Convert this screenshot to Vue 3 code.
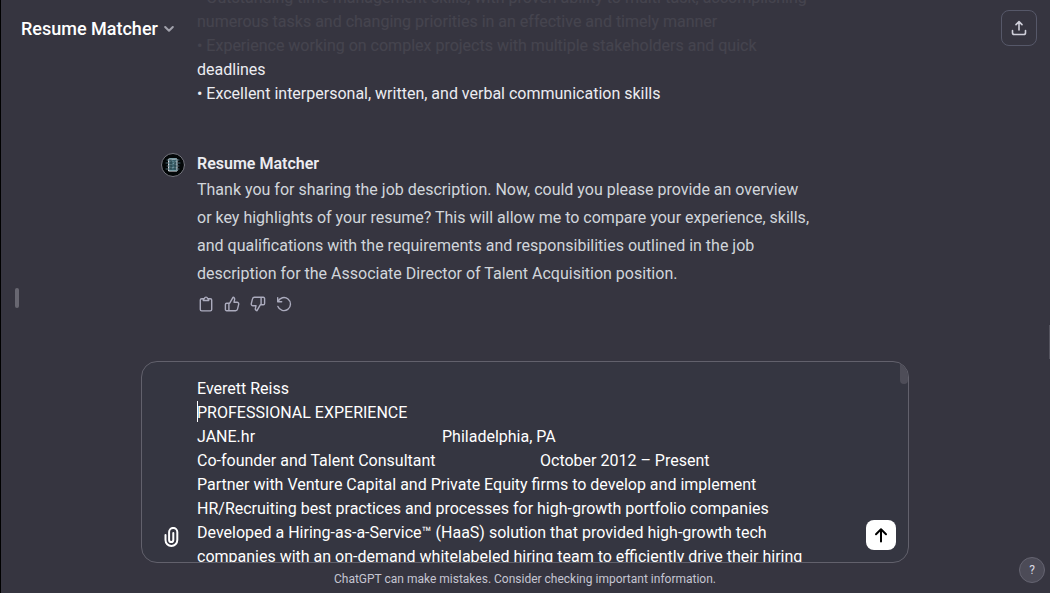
<script setup>
import { ref } from 'vue'

const requirements = `• Outstanding time management skills, with proven ability to multi-task, accomplishing
numerous tasks and changing priorities in an effective and timely manner
• Experience working on complex projects with multiple stakeholders and quick
deadlines
• Excellent interpersonal, written, and verbal communication skills`

const reply = `Thank you for sharing the job description. Now, could you please provide an overview
or key highlights of your resume? This will allow me to compare your experience, skills,
and qualifications with the requirements and responsibilities outlined in the job
description for the Associate Director of Talent Acquisition position.`

const draft = ref(
  [
    'Everett Reiss',
    'PROFESSIONAL EXPERIENCE',
    'JANE.hr\t\t\t\tPhiladelphia, PA',
    'Co-founder and Talent Consultant\t\t\tOctober 2012 – Present',
    'Partner with Venture Capital and Private Equity firms to develop and implement',
    'HR/Recruiting best practices and processes for high-growth portfolio companies',
    'Developed a Hiring-as-a-Service™ (HaaS) solution that provided high-growth tech',
    'companies with an on-demand whitelabeled hiring team to efficiently drive their hiring',
  ].join('\n')
)
</script>

<template>
  <div class="page">
    <header class="topbar">
      <button class="model" type="button">
        Resume Matcher
        <svg width="10" height="10" viewBox="0 0 10 10" aria-hidden="true"><path d="M1.2 3 5 6.8 8.8 3" /></svg>
      </button>
      <button class="share" type="button" aria-label="Share chat">
        <svg width="16" height="16" viewBox="0 0 16 16" aria-hidden="true">
          <path d="M8 10V2M5 4.600 8 1.600l3 3M1.500 10.500v2.200c0 1 .7 1.800 1.800 1.800h9.400c1.100 0 1.800-.8 1.800-1.800v-2.200" />
        </svg>
      </button>
    </header>

    <button class="side-handle" type="button" aria-label="Open sidebar"></button>
    <div class="page-thumb"></div>

    <main class="thread">
      <p class="user-text">{{ requirements }}</p>
      <article class="message">
        <svg class="avatar" width="24" height="24" viewBox="0 0 24 24" aria-hidden="true">
          <circle cx="12" cy="12" r="11.5" fill="#030708" stroke="#777780" />
          <path d="M8 6h8v12H8z" fill="#39616b" />
          <path d="M6 7h3M5 10h3M6 13h3M5 16h3M15 7h3M16 10h3M15 13h3M16 16h2" stroke="#4b6a74" />
          <path d="M9 5.500h6M9 8.500l2-1 2 2 2-1M9 11.500h2l1-1 3 1M9 14l2 1 2-1 2 1M9 17.500h7" stroke="#7a9ea7" fill="none" />
          <path d="M10 7v9M14 9v7" stroke="#233c43" />
        </svg>
        <div class="body">
          <h2>Resume Matcher</h2>
          <p class="reply">{{ reply }}</p>
          <div class="actions">
            <button type="button" aria-label="Copy">
              <svg width="16" height="16" viewBox="0 0 16 16" aria-hidden="true">
                <path d="M5.200 2.700H3.700c-.8 0-1.400.6-1.400 1.400v9.400c0 .8.6 1.400 1.400 1.400h8.600c.8 0 1.400-.6 1.400-1.400V4.100c0-.8-.6-1.400-1.400-1.400h-1.500M5.300 4.500V2.700h1.100C6.600 1.700 7.200 1.100 8 1.100s1.400.6 1.600 1.600h1.100v1.800z" />
              </svg>
            </button>
            <button type="button" aria-label="Good response">
              <svg width="16" height="16" viewBox="0 0 16 16" aria-hidden="true">
                <path d="M4.900 7.200v7.500M2.700 7.200h3L9 1.300c1.200.1 1.900 1.200 1.600 2.400l-.6 2.500h3c1.200 0 2 1.100 1.700 2.200l-1.200 4.700c-.2.900-1 1.600-1.900 1.600H2.700c-.8 0-1.300-.6-1.300-1.300V8.500c0-.7.500-1.300 1.300-1.300z" />
              </svg>
            </button>
            <button type="button" aria-label="Bad response">
              <svg width="16" height="16" viewBox="0 0 16 16" aria-hidden="true">
                <path transform="rotate(180 8 8)" d="M4.900 7.200v7.500M2.700 7.200h3L9 1.300c1.200.1 1.900 1.200 1.600 2.400l-.6 2.500h3c1.200 0 2 1.100 1.700 2.200l-1.200 4.700c-.2.900-1 1.600-1.900 1.600H2.700c-.8 0-1.300-.6-1.300-1.300V8.500c0-.7.500-1.300 1.300-1.300z" />
              </svg>
            </button>
            <button type="button" aria-label="Regenerate">
              <svg width="16" height="16" viewBox="0 0 16 16" aria-hidden="true">
                <path d="M1.700 1.800v4h4M2 5.500A6.500 6.500 0 1 1 1.900 10.400" />
              </svg>
            </button>
          </div>
        </div>
      </article>
    </main>

    <footer class="dock">
      <form class="composer" @submit.prevent>
        <button class="attach" type="button" aria-label="Attach files">
          <svg width="16" height="20" viewBox="0 0 16 20" aria-hidden="true">
            <path d="M1.500 8v5a5.900 5.900 0 0 0 11.800 0V5a4.100 4.100 0 0 0-8.200 0v8a2.100 2.100 0 0 0 4.200 0V6" />
          </svg>
        </button>
        <textarea v-model="draft" aria-label="Message" rows="8" spellcheck="false"></textarea>
        <button class="send" type="submit" aria-label="Send message">
          <svg width="16" height="16" viewBox="0 0 16 16" aria-hidden="true"><path d="M8 14.500V2.500M3 7.200l5-5 5 5" /></svg>
        </button>
        <span class="caret"></span>
        <span class="thumb"></span>
      </form>
      <p class="note">ChatGPT can make mistakes. Consider checking important information.</p>
    </footer>

    <button class="help" type="button" aria-label="Help">?</button>
  </div>
</template>

<style>
body {
  margin: 0;
  background: #363540;
}
</style>

<style scoped>
.page {
  position: relative;
  display: flex;
  flex-direction: column;
  height: 100vh;
  overflow: hidden;
  background: #363540;
  color: #ececf1;
  font: 16px/24px Roboto, "Liberation Sans", sans-serif;
}
.page::before {
  content: "";
  position: absolute;
  z-index: 2;
  inset: 0 auto 0 0;
  width: 1px;
  background: #000;
}
button {
  padding: 0;
  border: 0;
  background: none;
  color: inherit;
  font: inherit;
  cursor: pointer;
}
svg {
  display: block;
  fill: none;
  stroke: currentColor;
  stroke-linecap: round;
  stroke-linejoin: round;
}
h2,
p {
  margin: 0;
}
.topbar {
  position: absolute;
  z-index: 1;
  inset: 0 0 auto;
  box-sizing: border-box;
  height: 56px;
  padding: 0 13px 0 21px;
  display: flex;
  align-items: center;
  justify-content: space-between;
  background: rgba(54, 53, 64, 0.92);
}
.model {
  display: flex;
  align-items: center;
  gap: 6px;
  padding-top: 2px;
  color: #fff;
  font-size: 18px;
  font-weight: 500;
}
.model svg {
  color: #a2a2ac;
  stroke-width: 2;
}
.share {
  box-sizing: border-box;
  width: 36px;
  height: 36px;
  display: grid;
  place-items: center;
  border: 1px solid #565869;
  border-radius: 8px;
  color: #d0d0da;
}
.share svg {
  stroke-width: 1.6;
}
.side-handle {
  position: absolute;
  left: 15px;
  top: 50%;
  width: 4px;
  height: 20px;
  margin-top: -9px;
  border-radius: 2px;
  background: #686771;
}
.page-thumb {
  position: absolute;
  right: 0;
  top: 325px;
  width: 1px;
  height: 34px;
  background: #55545f;
}
.thread {
  flex: 1;
  min-height: 0;
  box-sizing: border-box;
  width: 100%;
  max-width: 728px;
  margin: 0 auto;
  padding-bottom: 49px;
  display: flex;
  flex-direction: column;
  justify-content: flex-end;
  gap: 46px;
}
.user-text {
  padding-left: 36px;
  white-space: pre-line;
}
.message {
  display: flex;
  gap: 12px;
}
.avatar {
  flex: none;
  margin-top: 1px;
}
.body {
  flex: 1;
}
h2 {
  font-size: 16px;
  font-weight: 600;
  line-height: 24px;
}
.reply {
  color: #d1d5db;
  line-height: 28px;
  white-space: pre-line;
}
.actions {
  display: flex;
  gap: 10px;
  margin-top: 8px;
  padding-left: 1px;
  color: #acacbe;
}
.actions svg {
  stroke-width: 1.4;
}
.dock {
  width: 100%;
  max-width: 768px;
  margin: 0 auto;
}
.composer {
  position: relative;
  box-sizing: border-box;
  height: 202px;
  display: flex;
  align-items: flex-end;
  padding: 0 12px 0 22px;
  border: 1px solid #62616c;
  border-radius: 16px;
  background: #353641;
  overflow: hidden;
}
.attach {
  margin-bottom: 15px;
  color: #fff;
}
.attach svg {
  stroke-width: 2;
}
textarea {
  flex: 1;
  min-width: 0;
  height: 100%;
  box-sizing: border-box;
  padding: 15px 0 0 17px;
  border: 0;
  outline: 0;
  resize: none;
  overflow: hidden;
  background: none;
  color: #fff;
  font: inherit;
  white-space: pre;
  tab-size: 49px;
}
.send {
  width: 30px;
  height: 30px;
  margin-bottom: 12px;
  display: grid;
  place-items: center;
  border-radius: 8px;
  background: #fff;
  color: #000;
}
.send svg {
  stroke-width: 2;
}
.caret {
  position: absolute;
  left: 55px;
  top: 39px;
  width: 1px;
  height: 21px;
  background: #fff;
}
.thumb {
  position: absolute;
  right: 0;
  top: 0;
  width: 8px;
  height: 22px;
  border-radius: 0 0 4px 4px;
  background: #4e4d58;
}
.note {
  padding: 8px 0 6px;
  color: #c5c5d2;
  font-size: 12px;
  line-height: 16px;
  text-align: center;
}
.help {
  position: absolute;
  right: 5px;
  bottom: 10px;
  box-sizing: border-box;
  width: 26px;
  height: 26px;
  border: 1px solid #656471;
  border-radius: 50%;
  background: #4c4b57;
  color: #d9d9e3;
  font-size: 12px;
}
</style>
